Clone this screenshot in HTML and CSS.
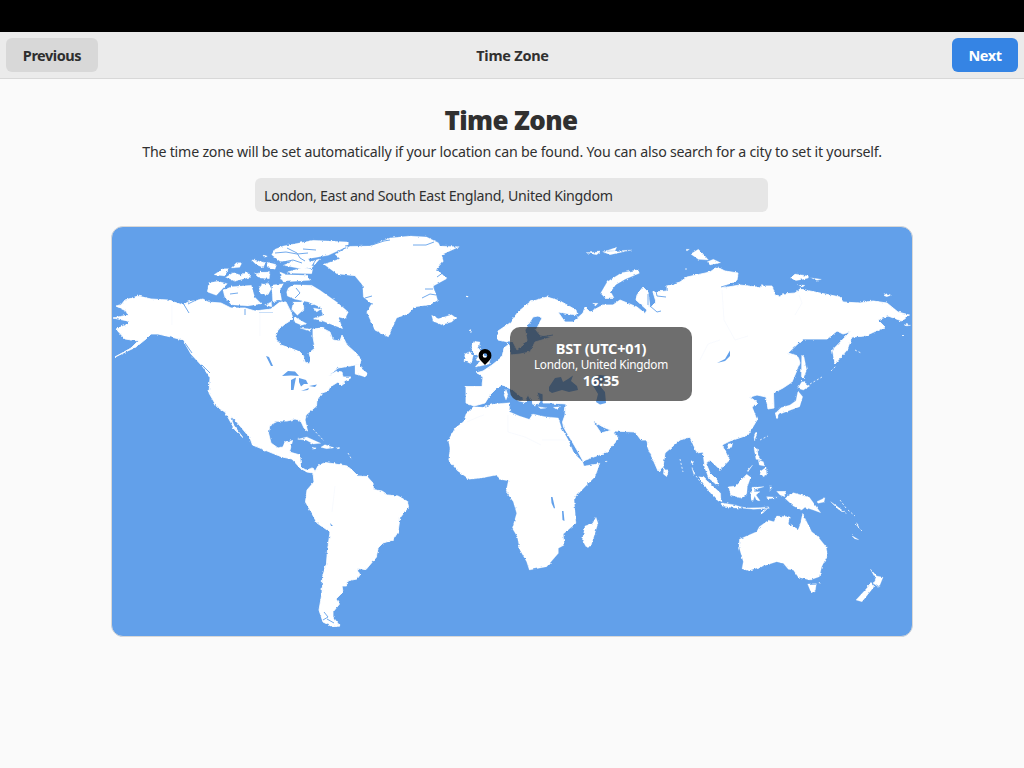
FILE: index.html
```html
<!DOCTYPE html>
<html lang="en">
<head>
<meta charset="utf-8">
<title>Time Zone</title>
<link rel="stylesheet" href="styles.css">
</head>
<body>
<div class="topbar"></div>
<header class="header">
  <button class="btn">Previous</button>
  <div class="header-title">Time Zone</div>
  <button class="btn btn-next">Next</button>
</header>
<main class="page">
  <h1 class="title"><span>Time Zone</span></h1>
  <p class="lead"><span>The time zone will be set automatically if your location can be found. You can also search for a city to set it yourself.</span></p>
  <div class="search"><span>London, East and South East England, United Kingdom</span></div>
  <div class="map">
    <svg class="world" viewBox="112 227 800 409" width="800" height="409">
      <defs>
        <filter id="coast" filterUnits="userSpaceOnUse" x="112" y="227" width="800" height="409" color-interpolation-filters="sRGB">
          <feTurbulence type="fractalNoise" baseFrequency="0.3" numOctaves="2" seed="4" result="n"/>
          <feDisplacementMap in="SourceGraphic" in2="n" scale="2.8" xChannelSelector="R" yChannelSelector="G"/>
        </filter>
      </defs>
      <g class="land" filter="url(#coast)">
        <!-- the Americas -->
        <path d="M116 306L121 305 125 300 132 298 138 296 151 299 168 300 183 305 188 302 203 299 208 302 221 303 231 308 245 308 255 311 271 309 280 302 286 302 291 312 293 319 285 324 278 330 275 338 281 345 290 348 300 352 303 355 305 362 309 364 311 360 309 353 315 348 313 337 313 329 322 328 330 332 333 340 340 341 342 335 347 345 357 354 361 359 360 364 350 366 338 368 328 376 337 371 342 372 343 377 352 377 346 381 341 385 338 382 330 387 328 391 322 393 317 400 316.500 406 306 415 305 420 307.500 431 304 428 300.500 420.500 295 419 287 421 278 421 270 425 268.500 433 271 443 278 448 283 447 285 442 292.500 440.500 289.500 452 300 455 300.500 467 306 470 313 468 315 471.500 318 466 325 462.500 332 463.500 347 466 352 470 358 476 367 476.500 373 483 373.500 489.500 382 491 388 495 398 496 407.500 501.500 408.500 507 400 518 398 532 393 540 383 543 378 548 376.500 557 366 569.500 357 568.500 360 575 357 579 347 581 346.500 586 342 586 343 592 336 599 339.500 604 333 612 333 617 340 626 333 627 323 622 319 610 322 593 322.500 577 326.500 563 327.500 550 330 532 317 523 310 510 305.500 502 307 490 314 482 313 473 307 472 300 468 292 459 282 457 272 453 252.500 445 250 438 235 420 231 416.500 233.500 425 242.500 437 235 430 225 412 217 407 209 393 210 378 203 367 191 354 183 340 171 337 158 334 151 334 146 339 136 347 115 357 131 348 138 341 125 339 116 329 128 324 128 321 113 318 128 315 126 311Z"/>
        <!-- Eurasia -->
        <path d="M466 403L466 386.500 482 386.500 483 377 476 373 483 371 492 365 502 357 504 348 509 344 511 355 520 354 530 352 535 342 552 337 540 335 536 330 542 318 538 316 533 317 525 330 527 340 520 348 517 350 512 340 507 342 498 340 498 331 510 323 518 312 530 302 547 297 560 301 576 310 577 315 558 312 565 322 573 322 583 313 585 307 590 312 603 305 613 305 620 300 637 307 645 313.500 647 310 636 300 637 295 643 287 648 292 650 308 656 302 653 292 667 291 667 286 680 282 687 277 710 272 717 267 725 271 738 273 737 280 722 288 740 285 757 287 760 288 761 286 772 286 775 295 780 297 782 294 795 293 800 289 820 293 840 297 843 302 860 303 873 301 887 303 898 312 909.500 315 902 321 888 316 878 320 885 327 865 336 852 337 847 350 835 364 832.500 350 850 332 843 334 837 331 827 339 803 339 788 353 798 356 800 363 792 382 783 388 773.500 393 774 408 768 409 766 397 757 395 750 397 758 403 752 407 757 420 748 435 730 441 722 445 729.500 460 720 469.500 710 460 706 463 710 473 717 480 718 486 709 478 705 468 703 452 697 453 690 437 680 440 665 453 663 467 658 471 648 448 647 440 641 440 635 432 613 431 603 427 593 421 601 433 612 430 619 438 607 452 583 461 577 450 563.500 427 562.500 422 565 415 566 404 550 403 543 403 543 394 537 392 540 402 534 406 528 395 515 382 528 395 525 400 513 390 502 385 497 388 490 395 485 403 474 406Z"/>
        <!-- Greenland, Iceland, Baffin and the high Arctic -->
        <g transform="translate(260 222) scale(.33333)">
          <path d="M192 127L240 110 225 97 270 73 330 72 390 48 450 42 500 45 535 62 540 72 598 74 545 98 550 118 530 140 560 170 520 192 533 235 510 248 465 255 445 275 410 288 385 345 345 325 320 270 335 245 310 225 308 190 285 162 230 155Z"/>
          <path d="M515 280L535 290 575 278 588 288 575 300 545 308 520 298Z"/>
          <path d="M70 72L160 55 265 60 265 72 205 100 145 110 150 120 180 110 155 138 130 142 70 130 100 118 60 118 35 98 45 82Z"/>
          <path d="M60 150L80 158 140 160 150 175 70 180 62 165Z"/>
          <path d="M80 150L125 138 158 142 155 155 100 154Z"/>
          <path d="M80 210L85 198 100 188 155 190 180 205 230 240 265 270 255 290 235 285 248 320 190 298 160 290 190 280 180 255 145 240 105 232 82 222Z"/>
          <path d="M105 285L140 305 125 310 102 300Z M35 190L70 185 60 205 65 235 38 240Z M100 240L130 240 132 262 112 280 95 262Z M160 258L182 262 170 270Z M120 318L155 322 150 328Z"/>
          <path d="M5 185L30 190 25 215 5 210Z M0 150L30 152 28 170 0 168Z M22 120L50 128 45 142 22 135Z M0 118L15 122 12 132 0 130Z M285 430L300 425 305 440 325 455 315 465 285 455Z M10 100L20 102 14 105Z"/>
          <path d="M612 415L628 390 632 425Z"/>
        </g>
        <g transform="translate(108 222) scale(.33333)">
          <path d="M302 182L330 178 358 185 325 220 298 210Z M345 205L370 194 430 190 440 225 460 245 420 252 370 248 350 225Z M318 158L345 140 362 140 350 162Z M355 165L375 152 400 160 415 148 428 165 380 178Z M370 138L385 122 402 122 395 136Z M430 113L450 116 470 126 462 135 445 128Z M440 155L480 150 482 168 450 165Z M452 195L480 182 490 200 480 218 458 215Z M470 248L490 240 492 255Z M465 100L478 103 470 106Z"/>
        </g>
        <!-- Caribbean -->
        <g transform="translate(200 360) scale(.33333)">
          <path d="M293 238L320 231 362 250 340 252 318 240Z M362 262L375 254 402 263 380 266Z M336 262L350 265 338 268Z M408 263L420 265 410 267Z"/>
        </g>
        <!-- Africa and Madagascar -->
        <g transform="translate(430 390) scale(.33333)">
          <path d="M130 50L160 52 190 42 240 38 238 65 268 78 298 88 308 72 345 80 385 84 395 115 415 150 432 190 458 215 462 228 510 220 495 260 465 290 432 325 438 400 400 432 403 465 385 475 385 490 350 530 298 540 290 515 270 480 262 440 247 415 260 370 250 335 228 305 235 272 207 268 200 255 155 264 118 268 82 242 56 210 60 175 55 150 75 115 100 95 108 72Z"/>
          <path d="M498 382L504 400 483 468 468 470 457 450 465 408 488 400Z M525 213L532 214 528 216Z"/>
          <path d="M325 50L348 54 332 56Z M370 52L392 50 378 57Z"/>
        </g>
        <!-- British Isles, Italian islands -->
        <g transform="translate(430 280) scale(.33333)">
          <path d="M122 205L132 184 150 186 146 205 158 220 180 240 178 252 135 262 148 245 138 240 145 228 130 218Z M102 245L105 222 118 215 130 225 125 245Z M108 48L115 48 112 52Z M120 148L126 152 122 155Z"/>
          <path d="M222 345L228 328 234 345 228 360Z M262 362L290 358 285 368Z"/>
        </g>
        <!-- Russian Arctic -->
        <g transform="translate(570 230) scale(.33333)">
          <path d="M92 190L112 155 155 128 205 119 208 130 165 148 137 164 122 185 132 203 105 203Z M48 68L90 66 80 74Z M98 65L185 60 120 74Z M110 62L140 52 135 62Z M362 72L385 58 400 72 415 90 385 88Z M412 95L430 88 452 98 420 105Z M68 220L84 220 76 228Z M348 58L358 58 352 62Z"/>
        </g>
        <!-- Far East -->
        <g transform="translate(740 260) scale(.33333)">
          <path d="M152 52L165 42 205 48 205 54 190 58 165 62Z M215 54L244 58 230 61Z M175 74L195 76 188 81Z M430 106L440 101 455 105 440 110Z M492 192L512 196 500 198Z"/>
          <path d="M185 285L192 290 200 330 190 355 184 350Z M173 385L187 363 209 378 190 390Z M174 393L188 410 179 440 150 451 115 464 106 460 123 443 150 435 168 422Z M105 458L118 462 110 476Z"/>
        </g>
        <g transform="translate(620 380) scale(.33333)">
          <path d="M132 262L145 275 140 290 130 282Z M236 290L250 292 302 340 303 365 290 360 262 328Z M303 368L340 374 362 380 385 385 345 384 305 378Z M370 384L420 383 445 380 448 385 400 388Z M420 398L442 386 428 400Z M326 320L345 318 380 283 392 292 382 320 380 345 365 355 332 345Z M396 322L432 320 405 328 402 335 420 335 408 345 420 362 410 362 404 348 398 365 393 350Z M322 192L338 190 335 202 325 203Z M402 172L408 155 412 160 404 180Z M402 205L412 203 414 225 425 240 408 238Z M415 240L430 245 434 258 418 255Z M420 275L438 262 440 285 430 290Z M382 272L398 255 384 275Z M450 315L456 325 450 332Z M440 350L478 352 445 356Z M475 335L495 334 498 342 482 342Z"/>
          <path d="M216 240L221 245 215 255 213 250Z M216 265L225 280 222 284Z"/>
        </g>
        <!-- Oceania -->
        <g transform="translate(680 450) scale(.33333)">
          <path d="M290 124L312 125 315 140 300 135Z M315 145L340 128 388 142 405 165 422 188 400 180 375 172 365 180 340 168Z M410 155L435 143 432 156 415 160Z M452 155L470 168 498 190 475 178Z M514 256L536 269 524 266Z M530 218L538 235 532 228Z"/>
          <path d="M178 268L195 260 230 245 238 230 265 211 282 215 290 198 328 200 325 222 355 238 360 225 368 190 380 215 395 245 412 258 438 290 443 315 425 350 418 380 390 390 355 382 340 360 325 358 310 340 290 335 250 348 205 362 186 356 190 335 177 290Z M383 402L409 401 406 421 394 429Z"/>
          <path d="M571 357L590 378 609 382 597 412 579 400 587 386Z M573 400L582 410 546 455 528 450 553 423Z"/>
        </g>
      </g>
      <!-- lakes and inland seas -->
      <g class="water">
        <path d="M282 376L288 371 295 371.500 299 376 291 375.500Z M291 380L296 377.500 294.500 385 293.500 390 291 390Z M299 378L306 380 308 384 304 384 301 386.500 299 382Z M301 391L309 388 308 390Z M309 386L317 384.500 315 387Z M266 356L269 357 273 366 271 366Z"/>
        <path d="M549 387L555 378 561 377 563 382 568 379 573 375.500 571 381 577 386 578 390 569 392 562 390 552 393 549 391Z"/>
        <path d="M592 377L600 375 607 376 604 381 600 386 605 392 606 403 600 404.500 596 402 598 394 592 384Z"/>
        <path d="M717 363L725 359 730 350.500 730 356 725 361Z M551 497L552.500 497 555 508 554 508.500 551.500 503Z M562 511L563.500 511 564.500 521 562.500 520Z M330 523L333 526 331 526Z"/>
      </g>
      <!-- straits, fjords and estuaries -->
      <path class="inlets" d="M275 253L286 252 297 254 308 253M287 248L297 253 300 258 305 261M283 262L293 260 302 263M303 249L316 250M315 261L312 266M296 288L300 293 295 298M345 246L355 244 362 246M372 245L384 241 390 240M413 245L426 245 434 242M436 270L444 272 437 277M422 298L430 294 436 295M425 289L433 289M365 298L372 296M368 303L373 304M230 294L238 293M183 303L189 313M188 304L198 299M185 343L192 353M202 365L210 373M245 309V315M324 612L328 617 323 620M327 619L334 623M541 337L553 335M656 291L657 296 666 297M650 306L657 312 661 311M648 294L648 305M721 287L738 282"/>
      <path class="islets" d="M810 384L822 377M831 371L836 366M855 350L861 353M902 335.500H905M760 440L768 436M819 582L821 585M840 500L846 508M848 510L855 516M855 524L862 531M680 459L683 472M696 476L702 484M466 296.500H468M470 330L472 332M685 269H688M313 429L324 441M348 453L352 460"/>
      <path class="rivers" d="M508 415V432L525 437 541 445M542 440H566M467 422L478 417 484 415M260 312V336M722 290L724 320 735 340 748 336M700 360L708 344 720 340M799 295L802 303 795 315M335 486L332 512M172 305V325"/>
      <path class="lake-line" d="M259 312.500H273"/>
      <path class="pin" fill-rule="evenodd" d="M485 349a6.400 6.400 0 0 0-6.400 6.400c0 3 1.400 4.400 3 6.100L485 365l3.400-3.500c1.600-1.700 3-3.100 3-6.100A6.400 6.400 0 0 0 485 349zm0 4.200a2.300 2.300 0 1 1 0 4.600 2.300 2.300 0 0 1 0-4.600z"/>
    </svg>
    <div class="bubble">
      <div class="zone"><span>BST (UTC+01)</span></div>
      <div class="place"><span>London, United Kingdom</span></div>
      <div class="zone"><span>16:35</span></div>
    </div>
  </div>
</main>
</body>
</html>
```
FILE: styles.css
```css
* { box-sizing: border-box; }
body {
  margin: 0;
  height: 768px;
  overflow: hidden;
  background: #fafafa;
  color: #303030;
  font: 14.2px/20px "Noto Sans", "Open Sans", sans-serif;
}
.topbar { height: 32px; background: #000; }
.header {
  display: grid;
  grid-template-columns: 1fr auto 1fr;
  align-items: center;
  height: 47px;
  padding: 0 6px;
  background: #ebebeb;
  border-bottom: 1px solid #d8d8d8;
}
.header-title {
  padding-left: 1px;
  font-weight: 700;
  font-size: 14.5px;
  letter-spacing: -0.25px;
}
.btn {
  justify-self: start;
  height: 34px;
  width: 92px;
  padding: 0;
  border: 0;
  border-radius: 6px;
  background: #d8d8d8;
  color: #2e2e2e;
  font: 700 14.5px/20px "Noto Sans", "Open Sans", sans-serif;
  letter-spacing: -0.45px;
}
.btn-next {
  justify-self: end;
  width: 66px;
  background: #3584e4;
  color: #fff;
}
.page {
  display: flex;
  flex-direction: column;
  align-items: center;
}
.title {
  margin: 23px 2px 0 0;
  font-size: 26px;
  line-height: 36px;
  font-weight: 900;
  letter-spacing: -0.6px;
}
.lead {
  margin: 4px 0 0;
  letter-spacing: -0.21px;
  white-space: nowrap;
}
.search {
  width: 513px;
  height: 34px;
  margin: 16px 1px 0 0;
  padding: 8px 9px 6px;
  border-radius: 6px;
  background: #e6e6e6;
  letter-spacing: -0.3px;
}
.map {
  position: relative;
  width: 802px;
  height: 411px;
  margin-top: 14px;
  border: 1px solid #d8d8d8;
  border-radius: 12px;
  background: #62a0ea;
  overflow: hidden;
}
.world { display: block; }
.land { fill: #fff; stroke: #fff; stroke-width: 0.8; }
.water { fill: #62a0ea; }
.inlets { fill: none; stroke: #62a0ea; stroke-width: 0.9; }
.islets { fill: none; stroke: #fff; stroke-width: 0.8; stroke-dasharray: 2 2; }
.rivers { fill: none; stroke: #f3f7fd; stroke-width: 0.6; }
.lake-line { stroke: #c8def8; stroke-width: 1; }
.pin { fill: #000; }
.bubble {
  position: absolute;
  left: 398px;
  top: 100px;
  width: 182px;
  height: 74px;
  padding-top: 12px;
  border-radius: 10px;
  background: rgba(48, 48, 48, 0.7);
  color: #fff;
  text-align: center;
}
.zone {
  font-weight: 700;
  font-size: 14.5px;
  line-height: 18px;
  letter-spacing: -0.2px;
}
.place {
  font-size: 11.8px;
  line-height: 14px;
  letter-spacing: -0.22px;
}
```
